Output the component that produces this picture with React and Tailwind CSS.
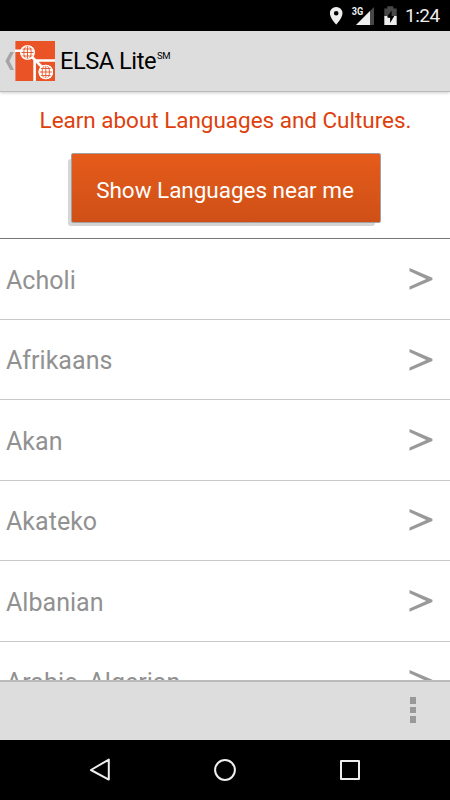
import React from "react";

const languages = [
  "Acholi",
  "Afrikaans",
  "Akan",
  "Akateko",
  "Albanian",
  "Arabic, Algerian",
];

function Globe({ x, y }) {
  return (
    <g transform={`translate(${x} ${y})`}>
      <circle r="7.3" fill="#fff" />
      <g fill="none" stroke="#e95325" strokeWidth="0.9">
        <path d="M0-6.5v13M-6.8 0H6.8M-5.6-3.5H5.6M-5.6 3.5H5.6" />
        <ellipse rx="3.7" ry="6.8" />
      </g>
      <circle r="6.7" fill="none" stroke="#fff" strokeWidth="1.1" />
    </g>
  );
}

function Logo() {
  return (
    <svg className="ml-[1px] h-10 w-10" viewBox="0 0 40 40">
      <rect x="0.4" width="39.6" height="40" fill="#e95325" />
      <path
        d="M0 9.8h8M16 15l12 12M19.6 19.5V40M20 19.5h20"
        fill="none"
        stroke="#fff"
        strokeWidth="2.6"
      />
      <Globe x={12.5} y={11.5} />
      <Globe x={30.8} y={31} />
    </svg>
  );
}

function StatusBar() {
  return (
    <div className="flex h-[31px] shrink-0 items-center bg-black pl-[329px] text-[#eee]">
      <svg className="h-[31px] w-[75px]" viewBox="329 0 75 31">
        <path
          fillRule="evenodd"
          fill="#eee"
          d="M336.2 7a6.2 6.2 0 0 0-6.3 6.3c0 4.7 6.3 11.4 6.3 11.4s6.3-6.7 6.3-11.4a6.2 6.2 0 0 0-6.3-6.3zm0 4a2.3 2.3 0 1 1 0 4.6 2.3 2.3 0 0 1 0-4.6z"
        />
        <path d="M374 7v18h-18z" fill="#484848" />
        <path d="M370 11v14h-14z" fill="#eee" />
        <text
          x="351.7"
          y="15"
          fill="#eee"
          className="font-['Roboto',sans-serif] text-[10px] font-bold"
          textLength="11.5"
          lengthAdjust="spacingAndGlyphs"
        >
          3G
        </text>
        <path d="M384.3 8.5h3V6.3h6v2.2h3.4V16h-12.4z" fill="#484848" />
        <path d="M384.3 16h12.4v9h-12.4z" fill="#eee" />
        <path d="M391.6 10.5l-4.7 6.8h3.2V16h1.5z" fill="#000" />
        <path d="M390 16h4.3l-4.2 7v-5.2h-2.6z" fill="#000" />
      </svg>
      <span className="pt-[2px] pl-[1px] text-[19px] tracking-[-0.5px]">
        1:24
      </span>
    </div>
  );
}

function Header() {
  return (
    <header className="z-10 flex h-[61px] shrink-0 items-center border-b border-[#bbb] bg-[#ddd] pl-[5px] shadow-[0_1px_3px_rgba(0,0,0,0.2)]">
      <svg className="h-5 w-[9px]" viewBox="0 0 9 20">
        <path
          d="M9 1H5.2L0.4 10l4.8 9H9L4.4 10z"
          fill="#a5a5a5"
        />
      </svg>
      <Logo />
      <h1 className="ml-[5px] pt-[2px] text-[23.7px] tracking-[-0.5px] text-black">
        ELSA Lite
      </h1>
      <span className="mb-[10px] ml-[1px] text-[9.5px] tracking-[-0.3px] text-black">
        SM
      </span>
    </header>
  );
}

function LanguageRow({ name }) {
  return (
    <li className="flex h-[80.45px] shrink-0 items-center justify-between border-b border-[#c8c8c8] pr-[17px] pl-[6px]">
      <span className="pt-[3px] text-[25px] tracking-[0.03px] text-[#919191]">
        {name}
      </span>
      <svg className="h-6 w-6" viewBox="0 0 24 24">
        <path
          d="M0.5 0.9v3.3L17.2 11.9 0.5 19.6v3.2L23.4 13v-2.2z"
          fill="#999"
        />
      </svg>
    </li>
  );
}

export default function App() {
  return (
    <div className="flex h-[800px] w-[450px] flex-col overflow-hidden bg-white font-['Roboto',sans-serif]">
      <StatusBar />
      <Header />

      <section className="flex h-[147px] shrink-0 flex-col items-center border-b border-[#777]">
        <p className="mt-3 ml-[1px] text-[22.5px] leading-8 tracking-[-0.03px] whitespace-nowrap text-[#de400c]">
          Learn about Languages and Cultures.
        </p>
        <div className="relative mt-[17px] ml-[2px]">
          <div className="absolute top-[6px] right-[6px] bottom-[-3px] left-[-3px] rounded-[3px] bg-[#d5d5d5]" />
          <button className="relative block h-[70px] w-[310px] rounded-[2px] border border-[#a3a09f] bg-gradient-to-b from-[#e55b1b] to-[#cf5017] pt-[5px] pr-[2px] text-[22.5px] tracking-[-0.03px] text-white">
            Show Languages near me
          </button>
        </div>
      </section>

      <ul className="flex min-h-0 flex-1 flex-col overflow-hidden pt-[0.4px]">
        {languages.map((name) => (
          <LanguageRow key={name} name={name} />
        ))}
      </ul>

      <div className="flex h-[60px] shrink-0 items-center justify-end border-t-2 border-[#bbb] bg-[#ddd] pr-[34px] pb-[2px]">
        <div className="flex flex-col gap-[3px]">
          <span className="h-[6.5px] w-[6.5px] bg-[#999]" />
          <span className="h-[6.5px] w-[6.5px] bg-[#999]" />
          <span className="h-[6.5px] w-[6.5px] bg-[#999]" />
        </div>
      </div>

      <nav className="flex h-[60px] shrink-0 items-center justify-between bg-black px-[88px]">
        <svg className="h-6 w-6" viewBox="0 0 24 24" fill="none" stroke="#eee">
          <path
            d="M20.8 1.6v20L2.9 12z"
            strokeWidth="2"
            strokeLinejoin="round"
          />
        </svg>
        <svg className="h-6 w-6" viewBox="0 0 24 24" fill="none" stroke="#eee">
          <circle cx="12" cy="12" r="9.9" strokeWidth="2" />
        </svg>
        <svg className="h-6 w-6" viewBox="0 0 24 24" fill="none" stroke="#eee">
          <rect
            x="3"
            y="3"
            width="18"
            height="18"
            strokeWidth="2"
            strokeLinejoin="round"
          />
        </svg>
      </nav>
    </div>
  );
}
